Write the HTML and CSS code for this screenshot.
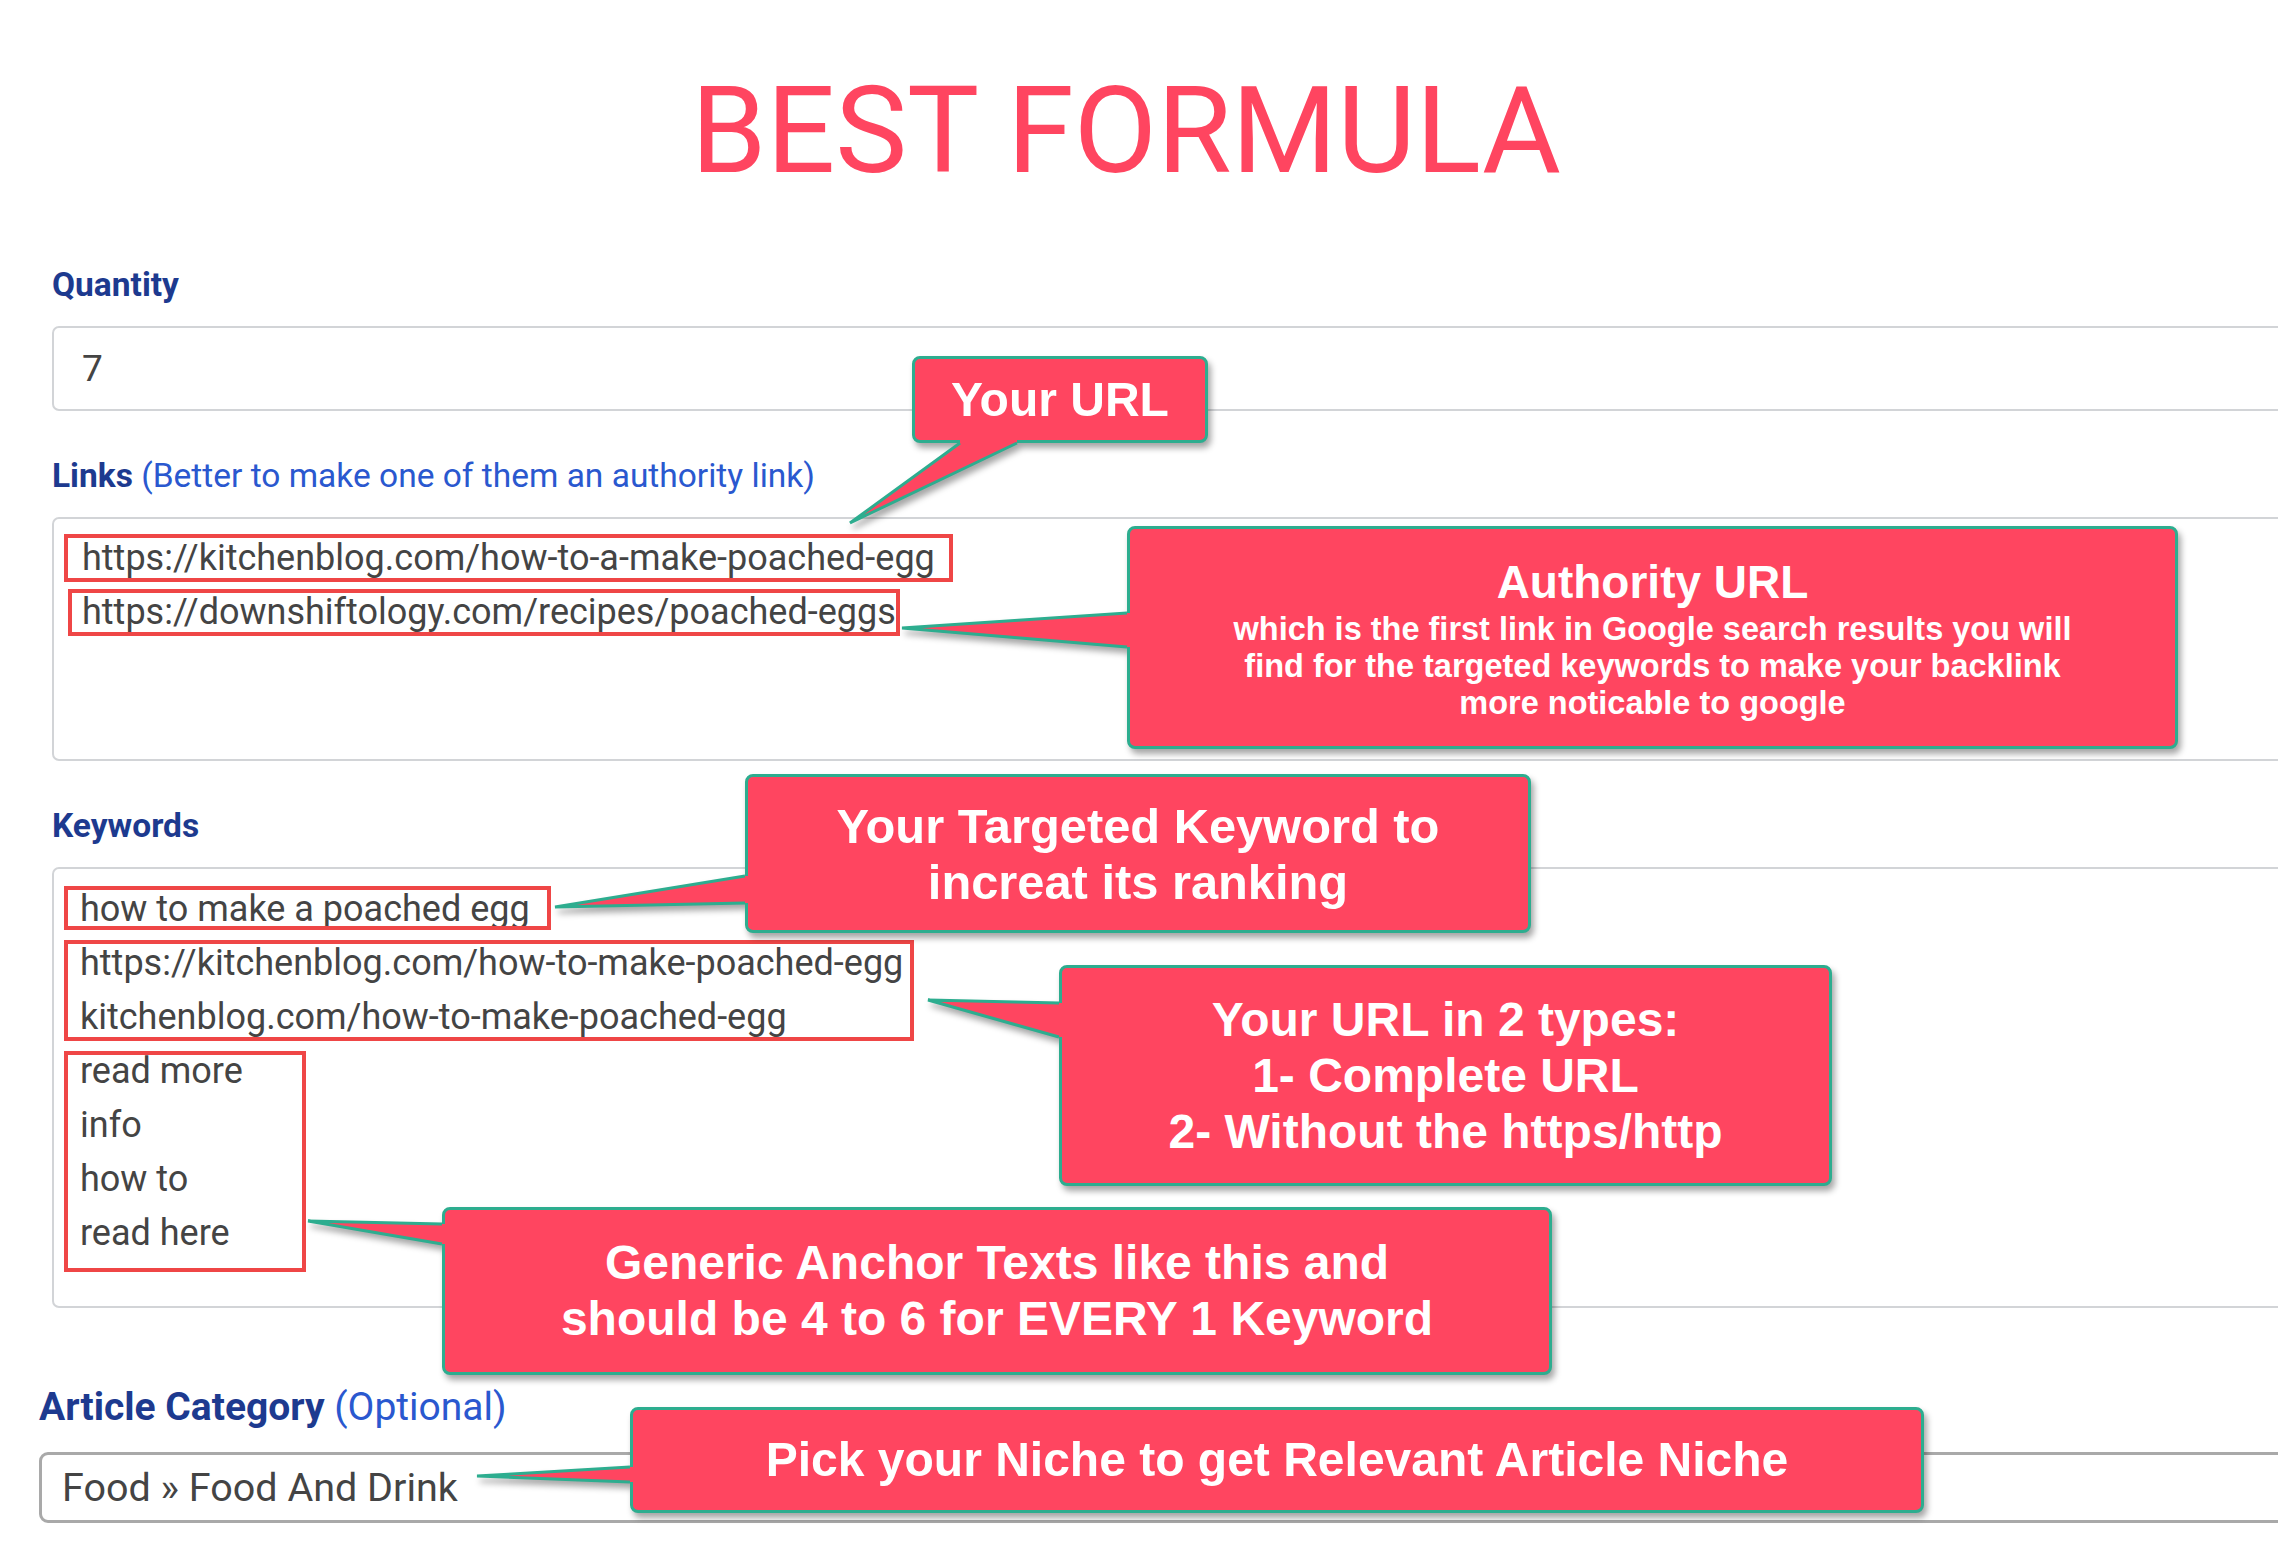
FILE: index.html
```html
<!DOCTYPE html>
<html lang="en">
<head>
<meta charset="utf-8">
<title>Best Formula</title>
<link rel="stylesheet" href="styles.css">
</head>
<body>
<div class="page">
  <h1 class="title">BEST FORMULA</h1>

  <form class="form">
    <div class="group">
      <div class="field-label">Quantity</div>
      <div class="input">7</div>
    </div>

    <div class="group">
      <div class="field-label">Links <span class="hint">(Better to make one of them an authority link)</span></div>
      <div class="textarea links">
        <div class="line">https://kitchenblog.com/how-to-a-make-poached-egg</div>
        <div class="line">https://downshiftology.com/recipes/poached-eggs</div>
        <span class="mark mark-l1"></span>
        <span class="mark mark-l2"></span>
      </div>
    </div>

    <div class="group">
      <div class="field-label">Keywords</div>
      <div class="textarea keywords">
        <div class="line">how to make a poached egg</div>
        <div class="line">https://kitchenblog.com/how-to-make-poached-egg</div>
        <div class="line">kitchenblog.com/how-to-make-poached-egg</div>
        <div class="line">read more</div>
        <div class="line">info</div>
        <div class="line">how to</div>
        <div class="line">read here</div>
        <span class="mark mark-k1"></span>
        <span class="mark mark-k2"></span>
        <span class="mark mark-k3"></span>
      </div>
    </div>

    <div class="group cat">
      <div class="field-label">Article Category <span class="hint">(Optional)</span></div>
      <div class="select">Food » Food And Drink</div>
    </div>
  </form>

  <div class="note n-url">
    <svg class="tail" viewBox="0 0 1 1"><polygon points="48,80 105,80 105,87 -62,167 48,87"/><polyline points="48,87 -62,167 105,87"/></svg>
    <div>Your URL</div>
  </div>

  <div class="note n-auth">
    <svg class="tail" viewBox="0 0 1 1"><polygon points="8,87 8,121 0,121 -225,102 0,87"/><polyline points="0,87 -225,102 0,121"/></svg>
    <div class="note-title">Authority URL</div>
    <div class="note-sub">which is the first link in Google search results you will<br>find for the targeted keywords to make your backlink<br>more noticable to google</div>
  </div>

  <div class="note n-kw">
    <svg class="tail" viewBox="0 0 1 1"><polygon points="8,102 8,129 0,129 -190,133 0,102"/><polyline points="0,102 -190,133 0,129"/></svg>
    <div>Your Targeted Keyword to<br>increat its ranking</div>
  </div>

  <div class="note n-types">
    <svg class="tail" viewBox="0 0 1 1"><polygon points="8,38 8,72 0,72 -131,35 0,38"/><polyline points="0,38 -131,35 0,72"/></svg>
    <div>Your URL in 2 types:<br>1- Complete URL<br>2- Without the https/http</div>
  </div>

  <div class="note n-generic">
    <svg class="tail" viewBox="0 0 1 1"><polygon points="8,17 8,37 0,37 -134,14 0,17"/><polyline points="0,17 -134,14 0,37"/></svg>
    <div>Generic Anchor Texts like this and<br>should be 4 to 6 for EVERY 1 Keyword</div>
  </div>

  <div class="note n-niche">
    <svg class="tail" viewBox="0 0 1 1"><polygon points="8,60 8,75 0,75 -153,69 0,60"/><polyline points="0,60 -153,69 0,75"/></svg>
    <div>Pick your Niche to get Relevant Article Niche</div>
  </div>
</div>
</body>
</html>
```

FILE: styles.css
```css
html, body {
  margin: 0;
  padding: 0;
  background: #ffffff;
}

body {
  overflow: hidden;
  font-family: Roboto, "Liberation Sans", Arial, sans-serif;
}

.page {
  position: relative;
  width: 2278px;
  height: 1554px;
  overflow: hidden;
}

.title {
  margin: 0;
  padding: 72px 26px 0 0;
  font-family: Roboto, "Liberation Sans", sans-serif;
  font-weight: 400;
  font-size: 121px;
  line-height: 118px;
  color: #ff4560;
  text-align: center;
}

.form {
  display: flex;
  flex-direction: column;
  padding: 75px 0 0 52px;
  margin: 0 -200px 0 0;
}

.group {
  display: flex;
  flex-direction: column;
  margin-bottom: 45px;
}

.field-label {
  font-size: 33.5px;
  line-height: 40px;
  font-weight: 700;
  color: #1d3a8f;
  margin-bottom: 21px;
  white-space: nowrap;
}

.hint {
  font-weight: 400;
  color: #2a58cf;
}

.input {
  box-sizing: border-box;
  height: 85px;
  border: 2px solid #d2d4d7;
  border-radius: 7px;
  display: flex;
  align-items: center;
  padding-left: 28px;
  font-size: 37px;
  color: #444444;
}

.textarea {
  position: relative;
  box-sizing: border-box;
  border: 2px solid #d2d4d7;
  border-radius: 7px;
  padding: 12px 0 0 28px;
  font-size: 36px;
  line-height: 54px;
  color: #444444;
}

.line {
  white-space: nowrap;
}

.links {
  height: 244px;
}

.keywords {
  height: 441px;
  padding-top: 13px;
  padding-left: 26px;
}

.cat {
  margin-left: -13px;
  margin-top: 30px;
}

.cat .field-label {
  font-size: 39px;
  line-height: 48px;
}

.select {
  box-sizing: border-box;
  height: 71px;
  border: 3px solid #a9a9a9;
  border-radius: 9px;
  display: flex;
  align-items: center;
  padding-left: 20px;
  font-size: 39.5px;
  color: #444444;
}

/* red annotation boxes */
.mark {
  position: absolute;
  box-sizing: border-box;
  border: 4px solid #ef4646;
}

.mark-l1 { left: 10px; top: 15px; width: 889px; height: 48px; }
.mark-l2 { left: 14px; top: 70px; width: 832px; height: 47px; }
.mark-k1 { left: 10px; top: 17px; width: 487px; height: 44px; }
.mark-k2 { left: 10px; top: 71px; width: 850px; height: 101px; }
.mark-k3 { left: 10px; top: 182px; width: 242px; height: 221px; }

/* callouts */
.note {
  position: absolute;
  box-sizing: border-box;
  background: #ff4560;
  border: 3px solid #2dad8f;
  border-radius: 8px;
  filter: drop-shadow(3px 5px 3px rgba(0, 0, 0, 0.35));
  display: flex;
  flex-direction: column;
  align-items: center;
  justify-content: center;
  text-align: center;
  color: #ffffff;
  font-family: "Liberation Sans", Arial, sans-serif;
  font-weight: 700;
  font-size: 48px;
  line-height: 56px;
  white-space: nowrap;
}

.tail {
  position: absolute;
  left: -3px;
  top: -3px;
  width: 1px;
  height: 1px;
  overflow: visible;
}

.tail polygon {
  fill: #ff4560;
}

.tail polyline {
  fill: none;
  stroke: #2dad8f;
  stroke-width: 3;
  stroke-linejoin: miter;
}

.n-url { left: 912px; top: 356px; width: 296px; height: 87px; }
.n-auth { left: 1127px; top: 526px; width: 1051px; height: 223px; padding-top: 6px; }
.n-kw { left: 745px; top: 774px; width: 786px; height: 159px; font-size: 48.8px; }
.n-types { left: 1059px; top: 965px; width: 773px; height: 221px; }
.n-generic { left: 442px; top: 1207px; width: 1110px; height: 168px; }
.n-niche { left: 630px; top: 1407px; width: 1294px; height: 106px; }

.note-title {
  font-size: 46px;
  line-height: 46px;
  margin-bottom: 6px;
}

.note-sub {
  font-size: 32.5px;
  line-height: 37px;
}
```
